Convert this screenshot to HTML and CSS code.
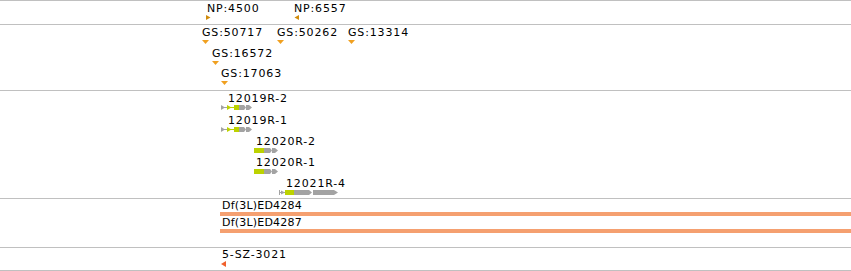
FILE: index.html
```html
<!DOCTYPE html>
<html lang="en">

<head>
  <meta charset="UTF-8">
  <title>Region tracks</title>
  <link rel="stylesheet" href="styles.css">
</head>

<body>
  <div class="tracks">

    <!-- Nucleotide polymorphisms -->
    <div class="track track-np">
      <div class="feature" style="left:206px; top:1px">
        <span class="label" style="margin-left:1px">NP:4500</span>
        <svg class="glyph" width="5" height="5"><polygon class="np" points="0,0 4.5,2.5 0,5" /></svg>
      </div>
      <div class="feature" style="left:294px; top:1px">
        <span class="label">NP:6557</span>
        <svg class="glyph" width="5" height="5"><polygon class="np" points="5,0 0.5,2.5 5,5" /></svg>
      </div>
    </div>

    <!-- Insertions -->
    <div class="track track-gs">
      <div class="feature" style="left:202px; top:1px">
        <span class="label">GS:50717</span>
        <svg class="glyph gs-mark" width="7" height="4"><polygon class="gs" points="0,0 7,0 3.5,4" /></svg>
      </div>
      <div class="feature" style="left:277px; top:1px">
        <span class="label">GS:50262</span>
        <svg class="glyph gs-mark" width="7" height="4"><polygon class="gs" points="0,0 7,0 3.5,4" /></svg>
      </div>
      <div class="feature" style="left:348px; top:1px">
        <span class="label">GS:13314</span>
        <svg class="glyph gs-mark" width="7" height="4"><polygon class="gs" points="0,0 7,0 3.5,4" /></svg>
      </div>
      <div class="feature" style="left:212px; top:22px">
        <span class="label">GS:16572</span>
        <svg class="glyph gs-mark" width="7" height="4"><polygon class="gs" points="0,0 7,0 3.5,4" /></svg>
      </div>
      <div class="feature" style="left:221px; top:42px">
        <span class="label">GS:17063</span>
        <svg class="glyph gs-mark" width="7" height="4"><polygon class="gs" points="0,0 7,0 3.5,4" /></svg>
      </div>
    </div>

    <!-- Transcripts -->
    <div class="track track-genes">
      <div class="feature" style="left:220px; top:1px">
        <span class="label" style="margin-left:8px">12019R-2</span>
        <svg class="glyph" width="33" height="5">
          <line class="utr-line" x1="1" y1="2.5" x2="8" y2="2.5" />
          <polygon class="utr" points="1,0 5,2.5 1,5" />
          <line class="cds-line" x1="8" y1="2.5" x2="15" y2="2.5" />
          <polygon class="cds" points="7,0 11.5,2.5 7,5" />
          <rect class="cds" x="14" y="0" width="5" height="5" />
          <polygon class="utr" points="19,0 24,0 26,2.5 24,5 19,5" />
          <polygon class="utr" points="26,0 29,0 32,2.5 29,5 26,5" />
        </svg>
      </div>
      <div class="feature" style="left:220px; top:23px">
        <span class="label" style="margin-left:8px">12019R-1</span>
        <svg class="glyph" width="33" height="5">
          <line class="utr-line" x1="1" y1="2.5" x2="8" y2="2.5" />
          <polygon class="utr" points="1,0 5,2.5 1,5" />
          <line class="cds-line" x1="8" y1="2.5" x2="15" y2="2.5" />
          <polygon class="cds" points="7,0 11.5,2.5 7,5" />
          <rect class="cds" x="14" y="0" width="5" height="5" />
          <polygon class="utr" points="19,0 24,0 26,2.5 24,5 19,5" />
          <polygon class="utr" points="26,0 29,0 32,2.5 29,5 26,5" />
        </svg>
      </div>
      <div class="feature" style="left:254px; top:44px">
        <span class="label" style="margin-left:2px">12020R-2</span>
        <svg class="glyph" width="25" height="5">
          <rect class="cds" x="0" y="0" width="10" height="5" />
          <polygon class="utr" points="10,0 16,0 18,2.5 16,5 10,5" />
          <polygon class="utr" points="18,0 21,0 24,2.5 21,5 18,5" />
        </svg>
      </div>
      <div class="feature" style="left:254px; top:65px">
        <span class="label" style="margin-left:2px">12020R-1</span>
        <svg class="glyph" width="25" height="5">
          <rect class="cds" x="0" y="0" width="10" height="5" />
          <polygon class="utr" points="10,0 16,0 18,2.5 16,5 10,5" />
          <polygon class="utr" points="18,0 21,0 24,2.5 21,5 18,5" />
        </svg>
      </div>
      <div class="feature" style="left:279px; top:86px">
        <span class="label" style="margin-left:7px">12021R-4</span>
        <svg class="glyph" width="60" height="5">
          <rect class="utr" x="0" y="0" width="1" height="5" />
          <line class="utr-line" x1="1" y1="2.5" x2="6" y2="2.5" />
          <polygon class="utr" points="2,0.5 6,2.5 2,4.5" />
          <rect class="cds" x="6" y="0" width="9" height="5" />
          <polygon class="utr" points="15,0 30,0 33,2.5 30,5 15,5" />
          <polygon class="utr" points="34,0 55,0 59,2.5 55,5 34,5" />
        </svg>
      </div>
    </div>

    <!-- Deficiencies -->
    <div class="track track-df">
      <div class="feature feature-wide" style="left:220px; top:0px">
        <span class="label label-df" style="margin-left:2px">Df(3L)ED4284</span>
        <div class="df-bar"></div>
      </div>
      <div class="feature feature-wide" style="left:220px; top:17px">
        <span class="label label-df" style="margin-left:2px">Df(3L)ED4287</span>
        <div class="df-bar"></div>
      </div>
    </div>

    <!-- Transposon insertion -->
    <div class="track track-ins">
      <div class="feature" style="left:221px; top:0px">
        <span class="label" style="margin-left:1px">5-SZ-3021</span>
        <svg class="glyph" width="5" height="6"><polygon class="ins" points="5,0 0,3 5,6" /></svg>
      </div>
    </div>

  </div>
</body>

</html>
```

FILE: styles.css
```css
body {
  margin: 0;
  padding: 0;
  background: #ffffff;
  font-family: "DejaVu Sans", Verdana, sans-serif;
  font-size: 11px;
  color: #000000;
  overflow: hidden;
}

.tracks {
  width: 851px;
  display: flex;
  flex-direction: column;
}

.track {
  position: relative;
  border-top: 1px solid #c0c0c0;
  overflow: hidden;
}

.track-np {
  height: 23px;
}

.track-gs {
  height: 65px;
}

.track-genes {
  height: 107px;
}

.track-df {
  height: 48px;
}

.track-ins {
  height: 22px;
  border-bottom: 1px solid #c0c0c0;
}

/* features sit at their genome position inside the track */
.feature {
  position: absolute;
  display: flex;
  flex-direction: column;
  align-items: flex-start;
}

.feature-wide {
  right: -20px;
}

.label {
  display: block;
  line-height: 13px;
  letter-spacing: 0.85px;
  white-space: nowrap;
}

.label-df {
  letter-spacing: 0.2px;
}

.glyph {
  display: block;
}

.gs-mark {
  margin-top: 1px;
}

.np {
  fill: #d18c0c;
}

.gs {
  fill: #f0a020;
}

.ins {
  fill: #f0602c;
}

.cds {
  fill: #bcd200;
}

.cds-line {
  stroke: #bcd200;
  stroke-width: 1;
}

.utr {
  fill: #a3a3a3;
}

.utr-line {
  stroke: #a3a3a3;
  stroke-width: 1;
}

.df-bar {
  align-self: stretch;
  height: 4px;
  background: #f5a070;
}
```
